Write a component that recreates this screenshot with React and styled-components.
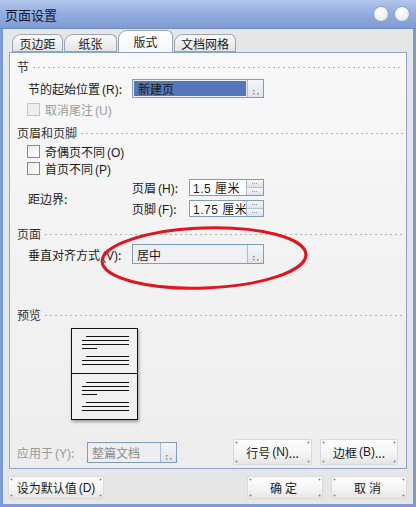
import React from "react";
import styled, { createGlobalStyle } from "styled-components";

const GlobalStyle = createGlobalStyle`
  html, body {
    margin: 0;
    padding: 0;
    background: #ffffff;
  }
  body {
    font-family: "Noto Sans CJK SC", "DejaVu Sans", sans-serif;
    font-size: 12px;
    color: #1a1a1a;
  }
`;

const Window = styled.div`
  width: 416px;
  height: 507px;
  display: flex;
  flex-direction: column;
  overflow: hidden;
  position: relative;
`;

const TitleBar = styled.div`
  height: 29px;
  flex: none;
  display: flex;
  align-items: center;
  justify-content: space-between;
  padding: 0 6px 0 5px;
  box-sizing: border-box;
  background: linear-gradient(#b3c7ec 0%, #93aee0 45%, #7f9bd2 100%);
  border-bottom: 1px solid #6f8cc6;
`;

const Title = styled.span`
  font-size: 13px;
  color: #111a30;
`;

const Circles = styled.div`
  display: flex;
  gap: 5px;
`;

const Circle = styled.span`
  width: 16px;
  height: 16px;
  border-radius: 50%;
  background: radial-gradient(circle at 40% 35%, #ffffff 0%, #f2f2f2 50%, #cfd6e2 100%);
  border: 1px solid #8ea4cf;
  box-sizing: border-box;
`;

const Frame = styled.div`
  flex: 1;
  display: flex;
  flex-direction: column;
  background: #e6e6e6;
  border-left: 3px solid #7d9ad3;
  border-right: 3px solid #7d9ad3;
  border-bottom: 3px solid #7d9ad3;
`;

const TabRow = styled.div`
  height: 23px;
  display: flex;
  align-items: flex-end;
  padding-left: 9px;
  position: relative;
  z-index: 2;
`;

const Tab = styled.div`
  height: ${(p) => (p.$active ? 22 : 18)}px;
  width: ${(p) => p.$w}px;
  margin-right: 1px;
  box-sizing: border-box;
  display: flex;
  align-items: center;
  justify-content: center;
  font-size: 12px;
  color: #1a1a1a;
  border: 1px solid #97a6bd;
  border-bottom: ${(p) => (p.$active ? "none" : "1px solid #8aa4cc")};
  border-radius: 9px 6px 0 0;
  background: ${(p) =>
    p.$active
      ? "linear-gradient(#ffffff, #f6f6f6)"
      : "linear-gradient(#fbfbfb, #e4e4e4)"};
  padding-top: ${(p) => (p.$active ? 0 : 1)}px;
`;

const Panel = styled.div`
  margin: 0 6px;
  height: 417px;
  box-sizing: border-box;
  border: 1px solid #8aa4cc;
  background: linear-gradient(#f8f8f8, #ededed);
  display: flex;
  flex-direction: column;
  position: relative;
`;

const Header = styled.div`
  height: 14px;
  margin-top: ${(p) => p.$mt}px;
  padding: 0 3px 0 7px;
  display: flex;
  align-items: center;
  gap: 4px;
  color: #333333;
  white-space: nowrap;
  &::after {
    content: "";
    flex: 1;
    height: 1px;
    margin-top: 2px;
    background-image: linear-gradient(to right, #b4b4b4 50%, transparent 50%);
    background-size: 5px 1px;
  }
`;

const FieldRow = styled.div`
  height: 20px;
  margin-top: ${(p) => p.$mt}px;
  padding-left: 18px;
  display: flex;
  align-items: center;
`;

const Label = styled.span`
  width: ${(p) => p.$w}px;
  flex: none;
  white-space: nowrap;
  color: ${(p) => (p.$disabled ? "#9a9a9a" : "#1a1a1a")};
`;

const Key = styled.span`
  font-family: "Liberation Sans", "DejaVu Sans", sans-serif;
  font-size: 12px;
  margin-left: 2px;
`;

const Select = styled.div`
  width: ${(p) => p.$w}px;
  height: ${(p) => p.$h || 19}px;
  box-sizing: border-box;
  display: flex;
  border: 1px solid #7f9db9;
  background: ${(p) => (p.$disabled ? "#eceef2" : "#eef0f3")};
`;

const SelectValue = styled.div`
  flex: 1;
  display: flex;
  align-items: center;
  padding-left: 4px;
  margin: ${(p) => (p.$selected ? "1px" : "0")};
  background: ${(p) => (p.$selected ? "#5475b8" : "transparent")};
  color: ${(p) => (p.$disabled ? "#8c8c8c" : "#1a1a1a")};
`;

const Grip = styled.div`
  width: 16px;
  flex: none;
  border-left: 1px solid #a9bad3;
  background: linear-gradient(#f4f6f9, #dfe4ec);
  display: flex;
  align-items: flex-end;
  justify-content: center;
  padding-bottom: 2px;
  box-sizing: border-box;
`;

const Dots = () => (
  <svg width="8" height="6" viewBox="0 0 8 6">
    <rect x="1" y="1" width="1.5" height="1.5" fill="#8c8c8c" />
    <rect x="1" y="4" width="1.5" height="1.5" fill="#8c8c8c" />
    <rect x="5" y="4" width="1.5" height="1.5" fill="#8c8c8c" />
  </svg>
);

const CheckRow = styled.div`
  height: 16px;
  margin-top: ${(p) => p.$mt}px;
  padding-left: 17px;
  display: flex;
  align-items: center;
  gap: 5px;
  color: ${(p) => (p.$disabled ? "#9a9a9a" : "#1a1a1a")};
`;

const Box = styled.span`
  width: 13px;
  height: 13px;
  box-sizing: border-box;
  border: 1px solid ${(p) => (p.$disabled ? "#c4c4c4" : "#8a8a8a")};
  background: ${(p) =>
    p.$disabled ? "#eeeeee" : "linear-gradient(135deg, #e9e9e9, #ffffff)"};
`;

const MarginGroup = styled.div`
  height: 38px;
  margin-top: 3px;
  padding-left: 18px;
  display: flex;
  align-items: center;
`;

const SpinList = styled.div`
  display: flex;
  flex-direction: column;
  gap: 4px;
`;

const SpinRow = styled.div`
  height: 17px;
  display: flex;
  align-items: center;
`;

const Spinner = styled.div`
  width: 75px;
  height: 17px;
  display: flex;
  box-sizing: border-box;
  border: 1px solid #7f9db9;
  background: #ffffff;
`;

const SpinValue = styled.div`
  flex: 1;
  display: flex;
  align-items: center;
  padding-left: 3px;
  white-space: nowrap;
  overflow: hidden;
  font-family: "Liberation Sans", "Noto Sans CJK SC", sans-serif;
  font-size: 12px;
  letter-spacing: 0.5px;
`;

const SpinButtons = styled.div`
  width: 16px;
  flex: none;
  display: flex;
  flex-direction: column;
  border-left: 1px solid #a9bad3;
`;

const SpinButton = styled.div`
  flex: 1;
  background: linear-gradient(#f5f7fa, #dde2ea);
  border-top: ${(p) => (p.$bottom ? "1px solid #b7c4d8" : "none")};
  display: flex;
  align-items: center;
  justify-content: center;
  &::before {
    content: "";
    width: 6px;
    height: 1px;
    background-image: linear-gradient(to right, #9a9a9a 50%, transparent 50%);
    background-size: 2px 1px;
  }
`;

const Preview = styled.div`
  margin: 7px 0 0 61px;
  width: 67px;
  height: 92px;
  display: flex;
  flex-direction: column;
  box-shadow: 1px 2px 3px rgba(0, 0, 0, 0.35);
`;

const Page = styled.div`
  height: 46px;
  box-sizing: border-box;
  border: 1px solid #111111;
  border-top: ${(p) => (p.$second ? "none" : "1px solid #111111")};
  background: #f1f1f1;
  display: flex;
  align-items: center;
  justify-content: center;
`;

const PageLines = () => (
  <svg width="65" height="44" viewBox="0 0 65 44">
    <g stroke="#111" strokeWidth="1">
      <line x1="14" y1="7.5" x2="57" y2="7.5" />
      <line x1="10" y1="11.5" x2="57" y2="11.5" />
      <line x1="10" y1="15.5" x2="57" y2="15.5" />
      <line x1="10" y1="19.5" x2="25" y2="19.5" />
      <line x1="14" y1="27.5" x2="57" y2="27.5" />
      <line x1="10" y1="31.5" x2="57" y2="31.5" />
      <line x1="10" y1="35.5" x2="57" y2="35.5" />
    </g>
  </svg>
);

const ApplyRow = styled.div`
  height: 26px;
  margin-top: 19px;
  padding: 0 8px 0 7px;
  display: flex;
  align-items: center;
`;

const Spacer = styled.div`
  flex: 1;
`;

const Button = styled.button`
  width: ${(p) => p.$w}px;
  height: ${(p) => p.$h || 22}px;
  margin-left: ${(p) => p.$ml || 0}px;
  box-sizing: border-box;
  padding: 0;
  font-family: "Noto Sans CJK SC", "DejaVu Sans", sans-serif;
  font-size: 12px;
  color: #1a1a1a;
  border: 1px solid #dadada;
  border-radius: 2px;
  background:
    radial-gradient(circle, #8a8a8a 0.9px, transparent 1.1px) 1px 1px / 3px 3px no-repeat,
    radial-gradient(circle, #8a8a8a 0.9px, transparent 1.1px) right 1px top 1px / 3px 3px no-repeat,
    radial-gradient(circle, #8a8a8a 0.9px, transparent 1.1px) left 1px bottom 1px / 3px 3px no-repeat,
    radial-gradient(circle, #8a8a8a 0.9px, transparent 1.1px) right 1px bottom 1px / 3px 3px no-repeat,
    linear-gradient(#ffffff, #f3f3f3 60%, #e4e4e4);
  display: flex;
  align-items: center;
  justify-content: center;
  letter-spacing: ${(p) => p.$ls || 0}px;
`;

const Footer = styled.div`
  flex: 1;
  display: flex;
  align-items: flex-start;
  padding: 7px 6px 0 5px;
`;

const Annotation = styled.svg`
  position: absolute;
  left: 82px;
  top: 170px;
  pointer-events: none;
`;

const Ellipse = () => (
  <Annotation width="230" height="80" viewBox="0 0 230 80">
    <ellipse
      cx="112"
      cy="35"
      rx="102"
      ry="30"
      fill="none"
      stroke="#e3141b"
      strokeWidth="3"
      transform="rotate(-2 112 35)"
    />
  </Annotation>
);

export default function App() {
  return (
    <Window>
      <GlobalStyle />
      <TitleBar>
        <Title>页面设置</Title>
        <Circles>
          <Circle />
          <Circle />
        </Circles>
      </TitleBar>
      <Frame>
        <TabRow>
          <Tab $w={51}>页边距</Tab>
          <Tab $w={53}>纸张</Tab>
          <Tab $w={55} $active>
            版式
          </Tab>
          <Tab $w={62}>文档网格</Tab>
        </TabRow>
        <Panel>
          <Header $mt={6}>节</Header>
          <FieldRow $mt={5}>
            <Label $w={104}>
              节的起始位置<Key>(R)</Key>:
            </Label>
            <Select $w={132}>
              <SelectValue $selected>新建页</SelectValue>
              <Grip>
                <Dots />
              </Grip>
            </Select>
          </FieldRow>
          <CheckRow $mt={3} $disabled>
            <Box $disabled />
            <span>
              取消尾注<Key>(U)</Key>
            </span>
          </CheckRow>
          <Header $mt={8}>页眉和页脚</Header>
          <CheckRow $mt={4}>
            <Box />
            <span>
              奇偶页不同<Key>(O)</Key>
            </span>
          </CheckRow>
          <CheckRow $mt={1}>
            <Box />
            <span>
              首页不同<Key>(P)</Key>
            </span>
          </CheckRow>
          <MarginGroup>
            <Label $w={104}>距边界:</Label>
            <SpinList>
              <SpinRow>
                <Label $w={57}>
                  页眉<Key>(H)</Key>:
                </Label>
                <Spinner>
                  <SpinValue>1.5 厘米</SpinValue>
                  <SpinButtons>
                    <SpinButton />
                    <SpinButton $bottom />
                  </SpinButtons>
                </Spinner>
              </SpinRow>
              <SpinRow>
                <Label $w={57}>
                  页脚<Key>(F)</Key>:
                </Label>
                <Spinner>
                  <SpinValue>1.75 厘米</SpinValue>
                  <SpinButtons>
                    <SpinButton />
                    <SpinButton $bottom />
                  </SpinButtons>
                </Spinner>
              </SpinRow>
            </SpinList>
          </MarginGroup>
          <Header $mt={9}>页面</Header>
          <FieldRow $mt={4}>
            <Label $w={104}>
              垂直对齐方式<Key>(V)</Key>:
            </Label>
            <Select $w={132} $h={20}>
              <SelectValue>居中</SelectValue>
              <Grip>
                <Dots />
              </Grip>
            </Select>
          </FieldRow>
          <Header $mt={43}>预览</Header>
          <Preview>
            <Page>
              <PageLines />
            </Page>
            <Page $second>
              <PageLines />
            </Page>
          </Preview>
          <ApplyRow>
            <Label $w={70} $disabled>
              应用于<Key>(Y)</Key>:
            </Label>
            <Select $w={90} $h={21} $disabled>
              <SelectValue $disabled>整篇文档</SelectValue>
              <Grip>
                <Dots />
              </Grip>
            </Select>
            <Spacer />
            <Button $w={79} $h={26}>
              行号<Key>(N)</Key>...
            </Button>
            <Button $w={78} $h={26} $ml={8}>
              边框<Key>(B)</Key>...
            </Button>
          </ApplyRow>
          <Ellipse />
        </Panel>
        <Footer>
          <Button $w={96} $h={23}>
            设为默认值<Key>(D)</Key>
          </Button>
          <Spacer />
          <Button $w={76} $h={23} $ls={3}>
            确定
          </Button>
          <Button $w={76} $h={23} $ml={8} $ls={3}>
            取消
          </Button>
        </Footer>
      </Frame>
    </Window>
  );
}
